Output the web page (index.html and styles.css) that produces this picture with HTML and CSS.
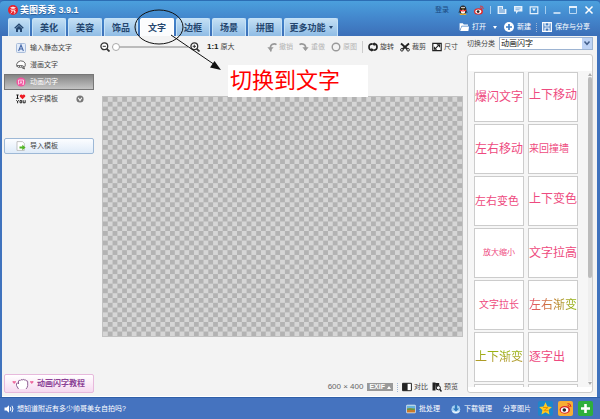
FILE: index.html
```html
<!DOCTYPE html>
<html lang="zh-CN">
<head>
    <meta charset="UTF-8">
    <meta name="viewport" content="width=device-width, initial-scale=1.0">
    <title>美图秀秀 3.9.1</title>
    <link rel="stylesheet" href="styles.css">
</head>
<body>
    <header class="header">
        <div class="titlebar">
            <svg class="logo" viewBox="0 0 10 10"><circle cx="5" cy="5" r="5" fill="#e8202c"/><path d="M2.5 2.5h5M5 1.5v3M2.5 4.6L5 2.8l2.5 1.8M3 5.3h3.5L6 6.5h1.3q0 2-1.5 1.8M4.3 5.5Q4.3 7.5 2.6 8.3" fill="none" stroke="#fff" stroke-width=".8"/></svg>
            <h1>美图秀秀 3.9.1</h1>
            <div class="window-tools">
                <button class="login">登录</button>
                <button aria-label="QQ"><svg viewBox="0 0 10 10"><ellipse cx="5" cy="5" rx="3.4" ry="4.6" fill="#222"/><path d="M1.8 5L.4 7.5l1.2.3zM8.2 5l1.4 2.5-1.2.3z" fill="#222"/><ellipse cx="5" cy="6.8" rx="2.2" ry="2" fill="#fff"/><path d="M1.8 4.6q3.2 1.6 6.4 0v1.2Q5 7.2 1.8 5.8z" fill="#e22"/><ellipse cx="3.4" cy="9.2" rx="1.9" ry=".8" fill="#f8b020"/><ellipse cx="6.6" cy="9.2" rx="1.9" ry=".8" fill="#f8b020"/><circle cx="4" cy="2.5" r=".8" fill="#fff"/><circle cx="6" cy="2.5" r=".8" fill="#fff"/><path d="M3.4 3.8h3.2L5 4.6z" fill="#f8b020"/></svg></button>
                <button aria-label="微博"><svg viewBox="0 0 10 10"><ellipse cx="4.5" cy="6.4" rx="4.4" ry="3.2" fill="#e12a2a"/><ellipse cx="4.3" cy="6.6" rx="3" ry="2.1" fill="#fff"/><circle cx="4.1" cy="6.6" r="1.4" fill="#222"/><path d="M6 1q3.2-.4 3.3 3M6.2 2.6q1.6 0 1.5 1.4" fill="none" stroke="#e83030" stroke-width=".9"/></svg></button>
                <i class="bar"></i>
                <button aria-label="皮肤"><svg viewBox="0 0 10 10"><path d="M1 1h5v3h3.4v5H.6V1z" fill="#e5f1fc"/><path d="M2 3h3M2 5h6M2 7h6" stroke="#4a8acb"/></svg></button>
                <button aria-label="反馈"><svg viewBox="0 0 10 10"><path d="M1 1h8.4v5.6H5L3 9V6.6H1z" fill="#e5f1fc"/><path d="M2.5 3h5.4M2.5 4.7h4" stroke="#5a96d2" stroke-width=".7"/></svg></button>
                <button aria-label="菜单"><svg viewBox="0 0 10 10"><path d="M1.2 1.8h7.6v6.8H1.2z" fill="none" stroke="#e5f1fc" stroke-width="1.2"/><path d="M3.2 3.4h3.6L5 6.6z" fill="#e5f1fc"/></svg></button>
                <i class="bar"></i>
                <button aria-label="最小化"><svg viewBox="0 0 10 10"><path d="M1.5 8h7" stroke="#e5f1fc" stroke-width="1.5"/></svg></button>
                <button aria-label="最大化"><svg viewBox="0 0 10 10"><path d="M1.5 2v6.5h7V2" fill="none" stroke="#b9d7f3"/><path d="M1 2h8" stroke="#e5f1fc" stroke-width="2"/></svg></button>
                <button aria-label="关闭"><svg viewBox="0 0 10 10"><path d="M1.5 1.5l7 7M8.5 1.5l-7 7" stroke="#fff" stroke-width="1.5"/></svg></button>
            </div>
        </div>
        <div class="menubar">
            <nav class="tabs">
                <a class="tab home" href="#" aria-label="首页"><svg viewBox="0 0 10 10"><path d="M.7 5.2L5 1.2l4.3 4" fill="none" stroke="#24466f" stroke-width="1.4"/><path d="M2 5.5l3-2.7 3 2.7V9H6V6.5H4V9H2z" fill="#24466f"/></svg></a>
                <a class="tab" href="#">美化</a>
                <a class="tab" href="#">美容</a>
                <a class="tab" href="#">饰品</a>
                <a class="tab active" href="#">文字</a>
                <a class="tab" href="#">边框</a>
                <a class="tab" href="#">场景</a>
                <a class="tab" href="#">拼图</a>
                <a class="tab more" href="#">更多功能<i class="caret"></i></a>
            </nav>
            <div class="file-tools">
                <button class="open"><svg viewBox="0 0 10 10"><path d="M.6 8.8V1.2h3.2l1 1.2H9v1.4H2.6z" fill="#fff"/><path d="M2.8 4.5H10L9.4 9H1.2z" fill="#fff"/></svg>打开<i class="caret"></i></button>
                <button><svg viewBox="0 0 10 10"><circle cx="5" cy="5" r="5" fill="#fff"/><path d="M5 2v6M2 5h6" stroke="#3c7cc4" stroke-width="1.7"/></svg>新建</button>
                <i class="dots"></i>
                <button><svg viewBox="0 0 10 10"><path d="M.7.7h8.6v8.6H.7z" fill="none" stroke="#fff" stroke-width="1.3"/><path d="M3 1v3h4V1M3 9V6h4v3" fill="none" stroke="#fff" stroke-width="1.2"/></svg>保存与分享</button>
            </div>
        </div>
    </header>

    <main class="content">
        <aside class="sidebar">
            <button class="side-item"><svg viewBox="0 0 10 10"><rect x=".5" y=".5" width="9" height="9" rx="1" fill="#e3ecf9" stroke="#a9bddb"/><path d="M2.6 8L5 2l2.4 6M3.4 6h3.2" fill="none" stroke="#4668a8" stroke-width="1.1"/></svg>输入静态文字</button>
            <button class="side-item"><svg viewBox="0 0 10 10"><path d="M1.2 7Q-.4 4 2 2t5.5-.6Q10 3 9.2 6q-.6 1-1.3 1.2L8.5 9 6 7.8" fill="#fff" stroke="#444" stroke-width=".8"/><path d="M1 5.5h5q2 .2 1.8 1.8H2z" fill="#fff" stroke="#444" stroke-width=".7"/><path d="M3 6.4h.8M5.4 6.4h.8" stroke="#333"/></svg>漫画文字</button>
            <button class="side-item selected"><svg viewBox="0 0 10 10"><circle cx="5" cy="5" r="4.6" fill="#f2559f"/><path d="M2.5 3v4.5M2.5 3h5v4.5H6.4M5 3.8v1.4M5 5L3.7 7M5 5l1.1 1.6" fill="none" stroke="#fff" stroke-width=".7"/></svg>动画闪字</button>
            <button class="side-item"><svg viewBox="0 0 10 10"><path d="M.4 1h2.2M.4 4.4h2.2M1.5 1v3.4" stroke="#111" fill="none"/><path d="M6.5 5.3L3.7 2.4Q3.6.6 5.3.5q.9 0 1.2.8Q7 .4 8 .5q1.6.3 1.3 2z" fill="#ed1c24"/><path d="M.4 6.2L1.6 7.7 2.8 6.2M1.6 7.5v1.8M4 6.6h1.7v2.2H4zM7.2 6.2v2.6h2V6.2" fill="none" stroke="#111" stroke-width=".9"/></svg>文字模板<svg class="expand" viewBox="0 0 10 10"><circle cx="5" cy="5" r="4.5" fill="#777"/><path d="M2.8 3.5L5 6.8l2.2-3.3" fill="none" stroke="#fff" stroke-width="1.3"/></svg></button>
            <button class="side-item import"><svg viewBox="0 0 10 10"><path d="M1 .6h5.5L8.3 2.4V9.4H1z" fill="#fff" stroke="#aaa" stroke-width=".7"/><path d="M3.5 5.5h2.8V3.8L9.6 6.6 6.3 9.2V7.6H3.5z" fill="#52b527"/></svg>导入模板</button>
            <button class="tutorial"><svg viewBox="0 0 22 12"><path d="M6.5 11Q3.5 7 4.5 5.5T6.5 6V3q.7-1.5 1.6-.3Q9 .8 10.2 2q1-1.3 2 0 1.3-1 2 .8 1.5-.3 1.5 1V7.5q-.2 2-1.7 3.5" fill="#fff" stroke="#83508a" stroke-width=".9"/><path d="M2.2 6L.4 4Q.5 2.3 2.2 3.3 3.9 2.3 4 4zM19.8 6L18 4q.1-1.700 1.8-.7 1.7-1 1.8.7z" fill="#ee6b9f"/></svg>动画闪字教程</button>
        </aside>

        <section class="workspace">
            <div class="toolbar">
                <div class="zoom">
                    <button aria-label="缩小"><svg viewBox="0 0 10 10"><circle cx="4.3" cy="4.3" r="3.4" fill="#fff" stroke="#333" stroke-width="1.3"/><path d="M2.7 4.3h3.2" stroke="#333"/><path d="M6.8 6.8l2.7 2.7" stroke="#333" stroke-width="1.8"/></svg></button>
                    <input class="slider" type="range" min="0" max="100" value="0" aria-label="缩放">
                    <button aria-label="放大"><svg viewBox="0 0 10 10"><circle cx="4.3" cy="4.3" r="3.4" fill="#fff" stroke="#333" stroke-width="1.3"/><path d="M2.6 4.3H6M4.3 2.6V6" stroke="#333"/><path d="M6.8 6.8l2.7 2.7" stroke="#333" stroke-width="1.8"/></svg></button>
                    <button class="actual"><b>1:1</b>原大</button>
                </div>
                <div class="history">
                    <button disabled><svg viewBox="0 0 10 10"><path d="M4 9.5Q2.5 4 5 2.6t4.5 0" fill="none" stroke="#999" stroke-width="1.7"/><path d="M.4 5.2h6.2L3.4 9z" fill="#999"/></svg>撤销</button>
                    <button disabled><svg viewBox="0 0 10 10"><path d="M6 8Q7.5 4 5 2.6t-4.5 0" fill="none" stroke="#999" stroke-width="1.7"/><path d="M3.4 5.2h6.2L6.6 9z" fill="#999"/></svg>重做</button>
                    <button disabled><svg viewBox="0 0 10 10"><circle cx="5" cy="5" r="3.8" fill="none" stroke="#999" stroke-width="1.4"/></svg>原图</button>
                </div>
                <div class="edit">
                    <button><svg viewBox="0 0 10 10"><path d="M4.5 1.8Q1 1.8 1 5t3 3.2M5.5 8.2Q9 8.2 9 5T6 1.8" fill="none" stroke="#222" stroke-width="1.7"/><path d="M3.4 5.8v4L6 8zM6.6 4.2v-4L4 2z" fill="#222"/></svg>旋转</button>
                    <button><svg viewBox="0 0 10 10"><path d="M1 1.5l6.5 5.7M9 1.5L2.5 7.2" stroke="#222" stroke-width="1.9"/><circle cx="1.9" cy="7.8" r="1.3" fill="#fff" stroke="#222"/><circle cx="8.1" cy="7.8" r="1.3" fill="#fff" stroke="#222"/></svg>裁剪</button>
                    <button><svg viewBox="0 0 10 10"><path d="M.8 1.3h8.4v7.4H.8z" fill="#fff" stroke="#222" stroke-width="1.2"/><path d="M2.6 7.2l4.6-4.4M4.8 2.8h2.7v2.5M2.4 4.8v2.5h2.4" fill="none" stroke="#222" stroke-width="1.1"/></svg>尺寸</button>
                </div>
            </div>

            <svg class="canvas" viewBox="0 0 600 400">
                <defs>
                    <pattern id="checker" width="16" height="16" patternUnits="userSpaceOnUse">
                        <rect width="16" height="16" fill="#d6d6d6"/>
                        <path d="M0 0h8v8H0zM8 8h8v8H8z" fill="#b3b3b3"/>
                    </pattern>
                </defs>
                <rect width="600" height="400" fill="url(#checker)"/>
            </svg>

            <div class="status">
                <span class="size">600 × 400</span>
                <button class="exif">EXIF<i class="caret-up"></i></button>
                <i class="dots"></i>
                <button><svg viewBox="0 0 10 10"><path d="M.6 1.3h8.8v7.4H.6z" fill="#fff" stroke="#222"/><path d="M.6 1.3h5v7.4h-5z" fill="#222"/></svg>对比</button>
                <button><svg viewBox="0 0 10 10"><path d="M.5.5h3v8h-3zM3.5 1h3.7v3.5L4 8z" fill="#222"/><circle cx="6.4" cy="5.8" r="2" fill="#fff" stroke="#222"/><path d="M7.7 7.2L9.5 9.5" stroke="#222" stroke-width="1.5"/></svg>预览</button>
            </div>
        </section>

        <section class="library">
            <div class="category">
                <label for="category">切换分类</label>
                <div class="select-box">
                    <select id="category">
                        <option>动画闪字</option>
                    </select>
                    <i class="arrow"><svg viewBox="0 0 10 10"><path d="M2.5 3.5L5 6.3l2.5-2.8" fill="none" stroke="#44608c" stroke-width="1.5"/></svg></i>
                </div>
            </div>
            <div class="panel">
                <div class="list">
                    <div class="templates">
                        <button class="f12">爆闪文字</button>
                        <button class="f12 up">上下移动</button>
                        <button class="f12">左右移动</button>
                        <button class="f10">来回撞墙</button>
                        <button class="f11">左右变色</button>
                        <button class="f12 up">上下变色</button>
                        <button class="f8">放大缩小</button>
                        <button class="f12">文字拉高</button>
                        <button class="f10 center">文字拉长</button>
                        <button class="f12"><span class="fade">左右渐变</span></button>
                        <button class="f12"><span class="fade fade-green">上下渐变</span></button>
                        <button class="f12">逐字出</button>
                        <button aria-label="模板"></button>
                        <button aria-label="模板"></button>
                    </div>
                    <div class="scrollbar">
                        <i class="caret-up"></i>
                        <div class="track"><div class="thumb"></div></div>
                        <i class="caret"></i>
                    </div>
                </div>
            </div>
        </section>
    </main>

    <footer class="footer">
        <a class="news" href="#"><svg viewBox="0 0 10 10"><path d="M.5 3.5h2L5 1.2v7.6L2.5 6.5h-2z" fill="#fff"/><path d="M6.3 3.2q1 1.8 0 3.6M8 1.8q2 3.2 0 6.4" fill="none" stroke="#fff"/></svg>想知道附近有多少帅哥美女自拍吗?</a>
        <button><svg viewBox="0 0 10 10"><rect x=".3" y=".8" width="9.4" height="8.4" rx="1" fill="#e8f0f4"/><path d="M1 1.6h8v3.5H1z" fill="#66b3e0"/><path d="M1 5l3-1 5 1.5V8.5H1z" fill="#c77a2b"/><path d="M1 4.5h8v1.3H1z" fill="#5c9d3c"/></svg>批处理</button>
        <button><svg viewBox="0 0 10 10"><circle cx="4.8" cy="5.3" r="4.4" fill="#a7d2f3"/><path d="M3.8 1h2.4v3.5h2L5 7.5 1.8 4.5h2z" fill="#2d78be"/><path d="M1.5 7.6q3.5 1.8 7 0" fill="none" stroke="#fff"/></svg>下载管理</button>
        <span class="share">分享图片</span>
        <div class="share-links">
            <button aria-label="QQ空间"><svg viewBox="0 0 15 15"><rect width="15" height="15" rx="2" fill="#1e86cb"/><path d="M7.5 1.2l1.9 4.2 4.5.5-3.3 3.1.9 4.5-4-2.2-4 2.2.9-4.5L1.1 5.9l4.5-.5z" fill="#ffcc22"/><path d="M5 6.5h5L5.8 9.7h4.4" fill="none" stroke="#e89000"/></svg></button>
            <button aria-label="新浪微博"><svg viewBox="0 0 15 15"><rect width="15" height="15" rx="2" fill="#f8ae35"/><ellipse cx="6.8" cy="8.8" rx="5.2" ry="3.9" fill="#d8232b"/><ellipse cx="6.6" cy="9" rx="3.8" ry="2.7" fill="#fff"/><circle cx="6.3" cy="9" r="1.8" fill="#222"/><path d="M9.5 2.6q3.5-.3 3.5 3.4M9.6 4.4q1.7 0 1.7 1.6" fill="none" stroke="#d8232b"/></svg></button>
            <button aria-label="更多分享"><svg viewBox="0 0 15 15"><rect width="15" height="15" rx="2" fill="#2eaf3c"/><path d="M7.5 3v9M3 7.5h9" stroke="#fff" stroke-width="2.6"/></svg></button>
        </div>
    </footer>

    <!-- 标注 -->
    <svg class="mark" viewBox="0 0 100 80">
        <ellipse cx="27" cy="27" rx="24" ry="17" fill="none" stroke="#111"/>
        <path d="M39 35L86 67" stroke="#111"/>
        <path d="M89 70l-11-2.5 4.5-6.5z" fill="#111"/>
    </svg>
    <p class="note">切换到文字</p>
</body>
</html>
```
FILE: styles.css
```css
* {
    box-sizing: border-box;
}

body {
    position: relative;
    display: flex;
    flex-direction: column;
    height: 100vh;
    margin: 0;
    overflow: hidden;
    background-color: #3f72bd;
    color: #444;
    font-family: "Liberation Sans", "Noto Sans CJK SC", sans-serif;
    font-size: 7px;
    line-height: 10px;
}

button {
    display: flex;
    align-items: center;
    gap: 3px;
    padding: 0;
    border: none;
    background: none;
    color: inherit;
    font: inherit;
    white-space: nowrap;
    cursor: pointer;
}

a {
    color: inherit;
    text-decoration: none;
}

svg {
    display: block;
    flex: none;
    width: 10px;
    height: 10px;
}

/* header */
.header {
    padding: 0 6px 0 8px;
    border-top: 1px solid #2c6db4;
    border-radius: 4px 4px 0 0;
    background: linear-gradient(#4ba0dd, #4386cc 50%, #3c6fb8);
    color: #fff;
}

.titlebar {
    display: flex;
    align-items: center;
    gap: 2px;
    height: 17px;
}

.titlebar h1 {
    margin: 0;
    font-size: 9px;
    text-shadow: 0 1px 1px #2a5a96;
}

.window-tools {
    display: flex;
    align-items: center;
    gap: 6px;
    margin-left: auto;
}

.login {
    margin-right: 3px;
    color: #1c4a80;
}

.bar {
    width: 1px;
    height: 8px;
    background-color: #a5cdf0;
}

.menubar {
    display: flex;
    justify-content: space-between;
    height: 18px;
}

.tabs {
    display: flex;
    gap: 2px;
}

.tab {
    display: flex;
    align-items: center;
    justify-content: center;
    gap: 3px;
    width: 34px;
    border: 1px solid #c5e2f7;
    border-bottom: none;
    border-radius: 2px 2px 0 0;
    background: linear-gradient(#c3dff4, #8fbce5);
    color: #24466f;
    font-size: 9px;
    font-weight: bold;
}

.tab.home {
    width: 22px;
}

.tab.more {
    width: 54px;
}

.tab.active {
    border-color: #fff;
    background: #fbfcfd;
}

.caret,
.caret-up {
    border: 2px solid transparent;
    border-top: 3px solid;
    border-bottom: none;
}

.caret-up {
    border-top: none;
    border-bottom: 3px solid;
}

/* giữ hai cạnh bên trong suốt để thành tam giác */
.caret,
.caret-up {
    border-right-color: transparent;
    border-left-color: transparent;
}

.file-tools {
    display: flex;
    align-items: center;
    gap: 5px;
    padding-right: 4px;
}

.open {
    margin-right: 2px;
}

.open .caret {
    margin-left: 4px;
}

.dots {
    height: 9px;
    border-left: 1px dotted #9fb6d4;
}

/* main */
.content {
    display: grid;
    grid-template-columns: 94px 1fr 132px;
    flex: 1;
    min-height: 0;
    margin: 0 3px 0 2px;
    border-bottom: 1px solid #fff;
    background-color: #f3f3f3;
}

.sidebar {
    display: flex;
    flex-direction: column;
    gap: 1px;
    padding: 4px 2px 3px;
}

.side-item {
    gap: 4px;
    height: 16px;
    padding: 0 9px 0 11px;
    border: 1px solid transparent;
}

.side-item.selected {
    border-color: #777;
    background: linear-gradient(#858585, #c4c4c4);
    color: #fff;
}

.expand {
    width: 8px;
    height: 8px;
    margin-left: auto;
}

.side-item.import {
    margin-top: 30px;
    border-color: #9db8d6;
    border-radius: 2px;
    background: linear-gradient(#fcfdff, #dfebf8);
}

.tutorial {
    height: 19px;
    margin-top: auto;
    padding-left: 7px;
    border: 1px solid #e7b9dc;
    border-radius: 2px;
    background: linear-gradient(#fff, #f6d9f0);
    color: #8c4296;
    font-size: 8px;
    font-weight: bold;
}

.tutorial svg {
    width: 22px;
    height: 12px;
}

.workspace {
    display: flex;
    flex-direction: column;
    padding: 0 2px 4px 4px;
}

.toolbar {
    display: flex;
    height: 22px;
    padding-right: 5px;
}

.zoom,
.history,
.edit {
    display: flex;
    align-items: center;
    gap: 6px;
}

.zoom {
    gap: 2px;
}

.history {
    margin-right: 5px;
    margin-left: auto;
}

.history button:disabled {
    color: #b5b5b5;
}

.edit {
    padding-left: 5px;
    border-left: 1px solid #ddd;
    border-image: linear-gradient(transparent 25%, #ccc 25%, #ccc 75%, transparent 75%) 1;
}

.toolbar button,
.status button {
    gap: 2px;
}

.toolbar .actual {
    margin-left: 5px;
}

.actual b {
    color: #222;
    font-size: 8px;
}

.slider {
    width: 76px;
    height: 10px;
    margin: 0;
    background: none;
    appearance: none;
}

.slider::-webkit-slider-runnable-track {
    height: 2px;
    background-color: #bbb;
}

.slider::-webkit-slider-thumb {
    width: 8px;
    height: 8px;
    margin-top: -3px;
    border: 1px solid #aaa;
    border-radius: 50%;
    background-color: #fff;
    appearance: none;
}

.canvas {
    width: auto;
    height: auto;
    margin: 38px 0 0 2px;
    border: 1px solid #c2c2c2;
}

.status {
    display: flex;
    align-items: center;
    justify-content: flex-end;
    gap: 4px;
    margin-top: auto;
    padding-right: 5px;
}

.size {
    color: #666;
    font-size: 8px;
}

.exif {
    height: 8px;
    padding: 0 2px;
    background-color: #999;
    color: #fff;
    font-weight: bold;
}

/* right panel */
.library {
    display: flex;
    flex-direction: column;
    gap: 4px;
    min-height: 0;
    padding: 1px 4px 3px 2px;
}

.category {
    display: flex;
    align-items: center;
    justify-content: space-between;
}

.select-box {
    display: flex;
    width: 94px;
    height: 13px;
    border: 1px solid #9db4d2;
    background-color: #fff;
}

.select-box select {
    flex: 1;
    min-width: 0;
    padding: 0 1px;
    border: none;
    background: none;
    color: #111;
    font: inherit;
    font-size: 8px;
    appearance: none;
}

.arrow {
    background-color: #bed3f5;
}

.panel {
    flex: 1;
    min-height: 0;
    padding: 16px 0 5px;
    border: 1px solid #ccc;
    border-radius: 3px;
    background-color: #fff;
}

.list {
    display: flex;
    justify-content: space-between;
    height: 100%;
    padding-left: 6px;
    overflow: hidden;
    background-color: #f6f6f6;
}

.templates {
    display: grid;
    grid-template-columns: 50px 50px;
    grid-auto-rows: 50px;
    gap: 2px 4px;
    padding-top: 1px;
}

.templates button {
    border: 1px solid #ccc;
    background-color: #fff;
    color: #ee4a80;
    line-height: 16px;
}

.templates .f12 {
    font-size: 12px;
}

.templates .f11 {
    font-size: 11px;
}

.templates .f10 {
    font-size: 10px;
}

.templates .f8 {
    justify-content: center;
    font-size: 8px;
}

.templates .center {
    justify-content: center;
}

.templates .up {
    padding-bottom: 4px;
}

.fade {
    background: linear-gradient(90deg, #e8506c, #c87838 45%, #8bb80c);
    background-clip: text;
    color: transparent;
}

.fade-green {
    background-image: linear-gradient(#93b80c, #b89030);
}

.scrollbar {
    display: flex;
    flex-direction: column;
    align-items: center;
    gap: 1px;
    padding: 2px 0;
    color: #aaa;
}

.track {
    flex: 1;
    width: 4px;
    background-color: #eee;
}

.thumb {
    height: 66%;
    border-radius: 2px;
    background-color: #bcbcbc;
}

/* footer */
.footer {
    display: flex;
    align-items: center;
    gap: 11px;
    height: 22px;
    padding: 0 7px 0 4px;
    border-top: 1px solid #2f5fa8;
    background-color: #4573bf;
    color: #fff;
}

.news {
    display: flex;
    align-items: center;
    gap: 3px;
    margin-right: auto;
}

.share-links {
    display: flex;
    gap: 5px;
    margin-left: -4px;
}

.share-links svg {
    width: 15px;
    height: 15px;
}

/* annotation on top of the window */
.mark {
    position: absolute;
    top: 0;
    left: 132px;
    width: 100px;
    height: 80px;
    pointer-events: none;
}

.note {
    position: absolute;
    top: 65px;
    left: 228px;
    width: 140px;
    margin: 0;
    padding-left: 2px;
    background-color: #fff;
    color: #f00;
    font-size: 22px;
    line-height: 32px;
}
```
